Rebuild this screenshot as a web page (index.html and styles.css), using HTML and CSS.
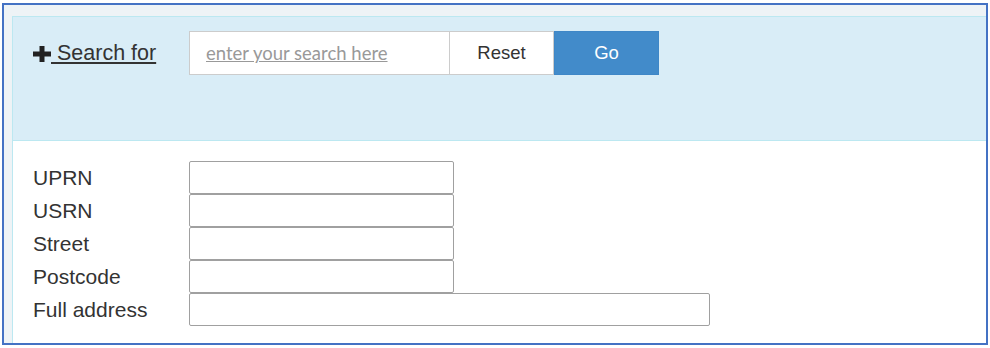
FILE: index.html
```html
<!DOCTYPE html>
<html lang="en">
  <head>
    <meta charset="UTF-8" />
    <meta name="viewport" content="width=device-width, initial-scale=1.0" />
    <title>Address Search</title>
    <link rel="stylesheet" href="styles.css">
  </head>
  <body>
    <div class="frame">
      <div class="panel">
        <div class="panel-heading">
          <div class="search-row">
            <a href="#" class="search-toggle">
              <svg class="plus-icon" viewBox="0 0 18 16" width="18" height="16">
                <path d="M6.5 0h5v5.5H18v5h-6.5V16h-5v-5.5H0v-5h6.5z" fill="#222" />
              </svg>
              <span> Search for</span>
            </a>
            <input type="text" class="search-input" placeholder="enter your search here" />
            <button class="btn btn-reset">Reset</button>
            <button class="btn btn-go">Go</button>
          </div>
        </div>

        <div class="panel-body">
          <div class="field-row">
            <label for="uprn">UPRN</label>
            <input type="text" id="uprn" class="field" />
          </div>
          <div class="field-row">
            <label for="usrn">USRN</label>
            <input type="text" id="usrn" class="field" />
          </div>
          <div class="field-row">
            <label for="street">Street</label>
            <input type="text" id="street" class="field" />
          </div>
          <div class="field-row">
            <label for="postcode">Postcode</label>
            <input type="text" id="postcode" class="field" />
          </div>
          <div class="field-row">
            <label for="address">Full address</label>
            <input type="text" id="address" class="field field-wide" />
          </div>
        </div>
      </div>
    </div>
  </body>
</html>
```

FILE: styles.css
```css
* {
  box-sizing: border-box;
}

body {
  margin: 0;
  font-family: "Liberation Sans", Arial, sans-serif;
  color: #333;
  background-color: #fff;
}

.frame {
  margin: 3px 2px 0 2px;
  height: 342px;
  border: 2px solid #4472c4;
  background-color: #eef3f6;
  padding: 11px 0 0 8px;
  overflow: hidden;
}

.panel {
  height: 100%;
  border: 1px solid #bce8f1;
  border-right: none;
  border-bottom: none;
  background-color: #fff;
}

.panel-heading {
  height: 124px;
  padding: 14px 20px 0 20px;
  background-color: #d9edf7;
  border-bottom: 1px solid #bce8f1;
}

.search-row {
  display: flex;
  align-items: center;
}

.search-toggle {
  display: flex;
  align-items: center;
  width: 156px;
  font-size: 21.5px;
  color: #333;
  text-decoration: underline;
}

.search-toggle span {
  white-space: pre;
}

.plus-icon {
  display: block;
  flex-shrink: 0;
  margin-top: 2px;
}

.search-input {
  width: 261px;
  height: 44px;
  padding: 0 16px;
  border: 1px solid #ccc;
  font-family: Lato, "Liberation Sans", sans-serif;
  font-size: 18.5px;
  outline: none;
}

.search-input::placeholder {
  color: #999;
  text-decoration: underline;
}

.btn {
  height: 44px;
  font-family: "Liberation Sans", Arial, sans-serif;
  font-size: 18.5px;
  cursor: pointer;
}

.btn-reset {
  width: 104px;
  background-color: #fff;
  color: #333;
  border: 1px solid #ccc;
  border-left: none;
}

.btn-go {
  width: 105px;
  background-color: #428bca;
  color: #fff;
  border: 1px solid #3f87c7;
}

.panel-body {
  padding: 20px;
}

.field-row {
  display: flex;
  align-items: center;
}

.field-row label {
  width: 156px;
  font-size: 21px;
}

.field {
  width: 265px;
  height: 33px;
  border: 1px solid #a0a0a0;
  border-radius: 2px;
  padding: 0 6px;
  font-size: 16px;
}

.field-wide {
  width: 521px;
}
```
